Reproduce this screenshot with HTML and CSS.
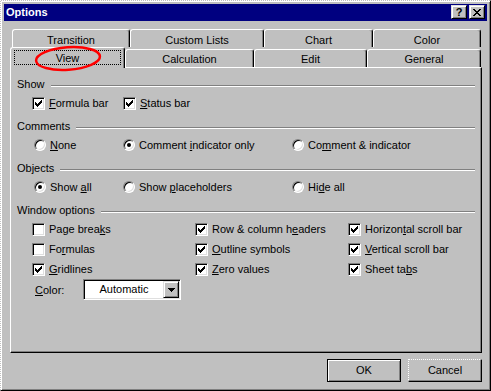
FILE: index.html
```html
<!DOCTYPE html>
<html lang="en">
  <head>
    <meta charset="utf-8" />
    <title>Options</title>
    <link rel="stylesheet" href="styles.css">
  </head>
  <body>
    <div class="window">
      <div class="titlebar">
        <span class="title">Options</span>
        <div class="caption-btns">
          <span class="cap-btn help">?</span>
          <span class="cap-btn">
            <svg width="8" height="7" viewBox="0 0 8 7" shape-rendering="crispEdges"><path d="M0 0h2v1h-2zM6 0h2v1h-2zM1 1h2v1h-2zM5 1h2v1h-2zM2 2h4v1h-4zM3 3h2v1h-2zM2 4h4v1h-4zM1 5h2v1h-2zM5 5h2v1h-2zM0 6h2v1h-2zM6 6h2v1h-2z"/></svg>
          </span>
        </div>
      </div>

      <div class="sheet">
        <div class="tabs">
          <div class="tab-row back">
            <div class="tab t-transition">Transition</div>
            <div class="tab t-lists">Custom Lists</div>
            <div class="tab t-chart">Chart</div>
            <div class="tab t-color">Color</div>
          </div>
          <div class="tab-row front">
            <div class="tab selected t-view"><span class="focus">View</span></div>
            <div class="tab t-calc">Calculation</div>
            <div class="tab t-edit">Edit</div>
            <div class="tab t-general">General</div>
          </div>
          <!-- red ring drawn over the View tab -->
          <svg class="mark" width="76" height="34" viewBox="0 0 76 34">
            <ellipse cx="38" cy="17.5" rx="32" ry="11.3" transform="rotate(-4 38 17.5)" />
          </svg>
        </div>

        <div class="panel">
          <div class="group-head">Show</div>
          <div class="opts opts-show">
            <label class="opt"><span class="check"><svg width="7" height="7" viewBox="0 0 7 7" shape-rendering="crispEdges"><path d="M0 2h1v3h-1zM1 3h1v3h-1zM2 4h1v3h-1zM3 3h1v3h-1zM4 2h1v3h-1zM5 1h1v3h-1zM6 0h1v3h-1z"/></svg></span><span><u>F</u>ormula bar</span></label>
            <label class="opt"><span class="check"><svg width="7" height="7" viewBox="0 0 7 7" shape-rendering="crispEdges"><path d="M0 2h1v3h-1zM1 3h1v3h-1zM2 4h1v3h-1zM3 3h1v3h-1zM4 2h1v3h-1zM5 1h1v3h-1zM6 0h1v3h-1z"/></svg></span><span><u>S</u>tatus bar</span></label>
          </div>

          <div class="group-head">Comments</div>
          <div class="opts opts-three">
            <label class="opt"><span class="radio"></span><span><u>N</u>one</span></label>
            <label class="opt"><span class="radio on"></span><span>Comment <u>i</u>ndicator only</span></label>
            <label class="opt"><span class="radio"></span><span>Co<u>m</u>ment &amp; indicator</span></label>
          </div>

          <div class="group-head">Objects</div>
          <div class="opts opts-three">
            <label class="opt"><span class="radio on"></span><span>Show <u>a</u>ll</span></label>
            <label class="opt"><span class="radio"></span><span>Show <u>p</u>laceholders</span></label>
            <label class="opt"><span class="radio"></span><span>Hi<u>d</u>e all</span></label>
          </div>

          <div class="group-head">Window options</div>
          <div class="opts opts-window">
            <label class="opt"><span class="check"></span><span>Page brea<u>k</u>s</span></label>
            <label class="opt"><span class="check"><svg width="7" height="7" viewBox="0 0 7 7" shape-rendering="crispEdges"><path d="M0 2h1v3h-1zM1 3h1v3h-1zM2 4h1v3h-1zM3 3h1v3h-1zM4 2h1v3h-1zM5 1h1v3h-1zM6 0h1v3h-1z"/></svg></span><span>Row &amp; column h<u>e</u>aders</span></label>
            <label class="opt"><span class="check"><svg width="7" height="7" viewBox="0 0 7 7" shape-rendering="crispEdges"><path d="M0 2h1v3h-1zM1 3h1v3h-1zM2 4h1v3h-1zM3 3h1v3h-1zM4 2h1v3h-1zM5 1h1v3h-1zM6 0h1v3h-1z"/></svg></span><span>Horizon<u>t</u>al scroll bar</span></label>

            <label class="opt"><span class="check"></span><span>Fo<u>r</u>mulas</span></label>
            <label class="opt"><span class="check"><svg width="7" height="7" viewBox="0 0 7 7" shape-rendering="crispEdges"><path d="M0 2h1v3h-1zM1 3h1v3h-1zM2 4h1v3h-1zM3 3h1v3h-1zM4 2h1v3h-1zM5 1h1v3h-1zM6 0h1v3h-1z"/></svg></span><span><u>O</u>utline symbols</span></label>
            <label class="opt"><span class="check"><svg width="7" height="7" viewBox="0 0 7 7" shape-rendering="crispEdges"><path d="M0 2h1v3h-1zM1 3h1v3h-1zM2 4h1v3h-1zM3 3h1v3h-1zM4 2h1v3h-1zM5 1h1v3h-1zM6 0h1v3h-1z"/></svg></span><span><u>V</u>ertical scroll bar</span></label>

            <label class="opt"><span class="check"><svg width="7" height="7" viewBox="0 0 7 7" shape-rendering="crispEdges"><path d="M0 2h1v3h-1zM1 3h1v3h-1zM2 4h1v3h-1zM3 3h1v3h-1zM4 2h1v3h-1zM5 1h1v3h-1zM6 0h1v3h-1z"/></svg></span><span><u>G</u>ridlines</span></label>
            <label class="opt"><span class="check"><svg width="7" height="7" viewBox="0 0 7 7" shape-rendering="crispEdges"><path d="M0 2h1v3h-1zM1 3h1v3h-1zM2 4h1v3h-1zM3 3h1v3h-1zM4 2h1v3h-1zM5 1h1v3h-1zM6 0h1v3h-1z"/></svg></span><span><u>Z</u>ero values</span></label>
            <label class="opt"><span class="check"><svg width="7" height="7" viewBox="0 0 7 7" shape-rendering="crispEdges"><path d="M0 2h1v3h-1zM1 3h1v3h-1zM2 4h1v3h-1zM3 3h1v3h-1zM4 2h1v3h-1zM5 1h1v3h-1zM6 0h1v3h-1z"/></svg></span><span>Sheet ta<u>b</u>s</span></label>
          </div>

          <div class="color-row">
            <span class="color-label"><u>C</u>olor:</span>
            <div class="combo">
              <span class="combo-text">Automatic</span>
              <span class="drop">
                <svg width="7" height="4" viewBox="0 0 7 4" shape-rendering="crispEdges"><path d="M0 0h7v1h-7zM1 1h5v1h-5zM2 2h3v1h-3zM3 3h1v1h-1z"/></svg>
              </span>
            </div>
          </div>
        </div>

        <div class="buttons">
          <span class="btn default">OK</span>
          <span class="btn">Cancel</span>
        </div>
      </div>
    </div>
  </body>
</html>
```

FILE: styles.css
```css
body{
  margin: 0;
  background: #c0c0c0;
  font-family: "Liberation Sans", Arial, sans-serif;
  font-size: 11px;
  color: #000;
}
u{
  text-underline-offset: 1px;
}

/* window frame */
.window{
  width: 491px;
  height: 391px;
  box-sizing: border-box;
  background: #c0c0c0;
  border-top: 1px dotted #fff;
  border-left: 1px dotted #fff;
  border-right: 1px solid #000;
  border-bottom: 1px solid #000;
  box-shadow: inset 1px 1px #fff, inset -1px -1px #808080;
  padding: 3px 3px 0 3px;
}
.titlebar{
  height: 17px;
  background: #000080;
  display: flex;
  align-items: flex-start;
  justify-content: space-between;
  padding: 0 2px;
}
.title{
  color: #fff;
  font-weight: bold;
  line-height: 17px;
}
.caption-btns{
  display: flex;
  gap: 2px;
  margin-top: 1px;
}
.cap-btn{
  width: 16px;
  height: 14px;
  box-sizing: border-box;
  background: #c0c0c0;
  border: 1px solid;
  border-color: #dfdfdf #000 #000 #dfdfdf;
  box-shadow: inset 1px 1px #fff, inset -1px -1px #808080;
  display: flex;
  align-items: center;
  justify-content: center;
}
.help{
  font-weight: bold;
  line-height: 12px;
}

/* tabs */
.sheet{
  width: 472px;
  margin: 8px 0 0 6px;
}
.tabs{
  position: relative;
}
.tab-row{
  display: flex;
}
.tab-row.back{
  height: 18px;
  padding-left: 2px;
}
.tab-row.front{
  height: 20px;
  align-items: flex-start;
}
.tab{
  box-sizing: border-box;
  height: 18px;
  border: 1px solid;
  border-color: #fff #000 transparent #fff;
  border-bottom: none;
  border-radius: 3px 3px 0 0;
  box-shadow: inset -1px 0 #808080;
  background: #c0c0c0;
  text-align: center;
  line-height: 13px;
  padding-top: 4px;
  white-space: nowrap;
}
.front .tab{
  margin-top: 2px;
  padding-top: 3px;
}
.front .tab.selected{
  position: relative;
  z-index: 1;
  margin: 0 0 -1px 0;
  height: 21px;
  padding: 2px 3px 0;
}
.focus{
  display: block;
  box-sizing: border-box;
  height: 15px;
  border: 1px dotted #000;
  padding-top: 1px;
  line-height: 12px;
}
.t-transition{ width: 118px; }
.t-lists{ width: 134px; }
.t-chart{ width: 109px; }
.t-color{ width: 108px; }
.t-view{ width: 115px; }
.t-calc{ width: 129px; }
.t-edit{ width: 113px; }
.t-general{ width: 114px; }

.mark{
  position: absolute;
  left: 20px;
  top: 12px;
  z-index: 2;
  pointer-events: none;
}
.mark ellipse{
  fill: none;
  stroke: #f00;
  stroke-width: 2.5;
}

/* page */
.panel{
  box-sizing: border-box;
  height: 286px;
  border: 1px solid;
  border-color: #fff #000 #000 #fff;
  box-shadow: inset -1px -1px #808080;
  padding: 9px 6px 0 6px;
}
.group-head{
  display: flex;
  height: 14px;
  line-height: 14px;
  margin-top: 8px;
  white-space: nowrap;
}
.group-head:first-child{
  margin-top: 0;
}
.group-head::after{
  content: "";
  flex: 1;
  height: 0;
  margin: 8px 0 0 6px;
  border-top: 1px solid #808080;
  border-bottom: 1px solid #fff;
}
.opts{
  display: grid;
  grid-auto-rows: 16px;
  margin: 4px 0 0 15px;
}
.opts-show{ grid-template-columns: 91px 1fr; }
.opts-three{ grid-template-columns: 89px 169px 1fr; }
.opts-window{
  grid-template-columns: 163px 153px 1fr;
  row-gap: 4px;
}
.opt{
  display: flex;
  align-items: center;
  gap: 4px;
  white-space: nowrap;
}
.check{
  width: 13px;
  height: 13px;
  box-sizing: border-box;
  border: 1px solid;
  border-color: #808080 #fff #fff #808080;
  box-shadow: inset 1px 1px #000, inset -1px -1px #dfdfdf;
  background: #fff;
  display: flex;
  align-items: center;
  justify-content: center;
}
.radio{
  width: 12px;
  height: 12px;
  box-sizing: border-box;
  margin-left: 2px;
  border: 1px solid;
  border-color: #808080 #fff #fff #808080;
  border-radius: 50%;
  box-shadow: inset 1px 1px #000, inset -1px -1px #dfdfdf;
  background: #fff;
  display: flex;
  align-items: center;
  justify-content: center;
}
.radio.on::after{
  content: "";
  width: 4px;
  height: 4px;
  border-radius: 50%;
  background: #000;
}

.color-row{
  display: flex;
  align-items: center;
  margin: 2px 0 0 18px;
}
.color-label{
  width: 48px;
}
.combo{
  display: flex;
  align-items: center;
  width: 98px;
  height: 21px;
  box-sizing: border-box;
  border: 1px solid;
  border-color: #808080 #fff #fff #808080;
  box-shadow: inset 1px 1px #000, inset -1px -1px #dfdfdf;
  background: #fff;
  padding: 1px 1px 1px 1px;
}
.combo-text{
  flex: 1;
  text-align: center;
  line-height: 17px;
}
.drop{
  width: 16px;
  height: 17px;
  box-sizing: border-box;
  background: #c0c0c0;
  border: 1px solid;
  border-color: #dfdfdf #000 #000 #dfdfdf;
  box-shadow: inset 1px 1px #fff, inset -1px -1px #808080;
  display: flex;
  align-items: center;
  justify-content: center;
}

/* bottom buttons */
.buttons{
  display: flex;
  justify-content: flex-end;
  gap: 7px;
  margin-top: 6px;
}
.btn{
  width: 74px;
  height: 23px;
  box-sizing: border-box;
  border: 1px solid;
  border-color: #fff #000 #000 #fff;
  border-top-style: dotted;
  border-left-style: dotted;
  box-shadow: inset -1px -1px #808080;
  text-align: center;
  line-height: 21px;
}
.btn.default{
  border: 1px solid #000;
  box-shadow: inset 1px 1px #fff, inset -1px -1px #808080;
}
```
